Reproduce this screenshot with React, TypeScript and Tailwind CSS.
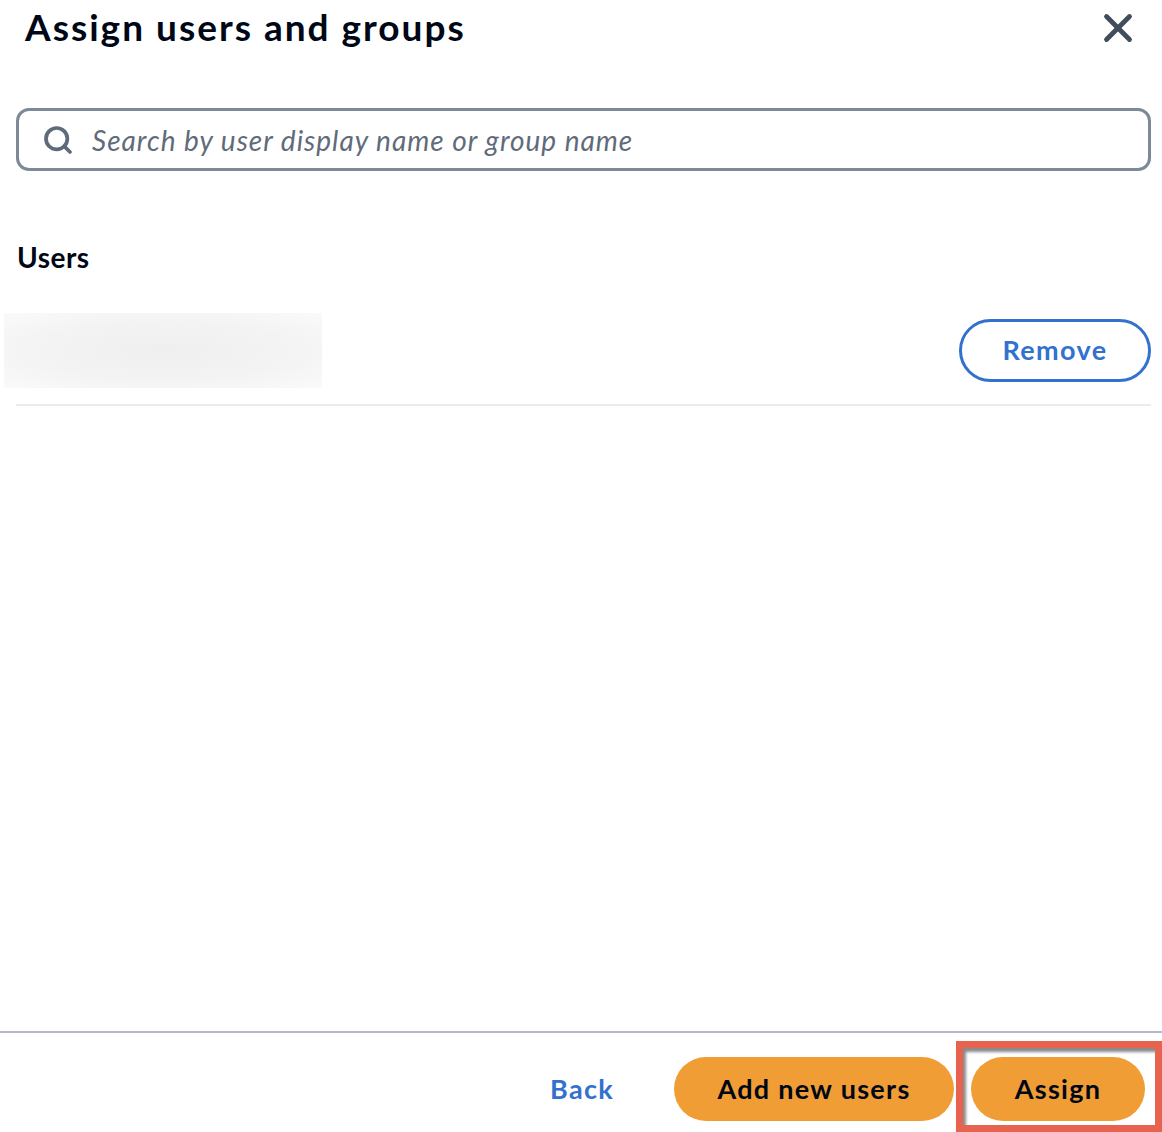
import { X, Search } from 'lucide-react'

export default function App() {
  return (
    <div className="w-[1162px] h-[1132px] bg-white flex flex-col font-['Lato',sans-serif] text-[#000716] overflow-hidden">
      {/* Header */}
      <div className="flex items-start justify-between pl-[25px] pr-[21px] pt-[1px]">
        <h1 className="text-[37px] leading-[52px] font-bold tracking-[2px]">Assign users and groups</h1>
        <button className="mt-[4px] text-[#414d5c]" aria-label="Close">
          <X className="w-[46px] h-[46px]" strokeWidth={2.5} />
        </button>
      </div>

      {/* Search */}
      <div className="pl-[16px] pr-[11px] pt-[55px]">
        <div className="h-[63px] border-[3px] border-[#7d8998] rounded-[13px] flex items-center gap-[18px] pl-[23px]">
          <Search className="w-[32px] h-[32px] text-[#5f6b7a]" strokeWidth={2.8} />
          <span className="text-[28px] italic tracking-[1px] text-[#5f6b7a]">Search by user display name or group name</span>
        </div>
      </div>

      {/* Users */}
      <div className="pl-[17px] pt-[67px] text-[28px] font-bold leading-[38px] tracking-[0.5px]">Users</div>

      <div className="flex items-center justify-between pl-[4px] pr-[11px] pt-[37px]">
        <div className="w-[318px] h-[75px] bg-[radial-gradient(ellipse_at_center,#efefef_0%,#f3f3f3_55%,#fafafa_100%)]" />
        <button className="h-[63px] w-[192px] rounded-full border-[3px] border-[#3271ce] text-[#3271ce] text-[27px] font-bold tracking-[1.4px]">
          Remove
        </button>
      </div>
      <div className="ml-[16px] mr-[11px] mt-[16px] h-[2px] bg-[#e9ebed]" />

      <div className="flex-1" />

      {/* Footer */}
      <div className="border-t-2 border-[#b4b9c5] flex items-start justify-end pt-[8px]">
        <button className="mt-[16px] h-[64px] text-[27px] font-bold tracking-[1.3px] text-[#3271ce]">Back</button>
        <button className="ml-[60px] mt-[16px] h-[64px] w-[280px] rounded-full bg-[#f09d36] text-[27px] font-bold tracking-[1.3px] text-[#000716]">
          Add new users
        </button>
        <div className="ml-[2px] border-[7px] border-[#e8634f] pt-[9px] pl-[8px] pr-[10px] pb-[4px] shadow-[inset_3px_4px_3px_rgba(60,60,60,0.6),2px_3px_3px_rgba(80,80,80,0.5)]">
          <button className="h-[64px] w-[174px] rounded-full bg-[#f09d36] text-[27px] font-bold tracking-[1.3px] text-[#000716]">
            Assign
          </button>
        </div>
      </div>
    </div>
  )
}
